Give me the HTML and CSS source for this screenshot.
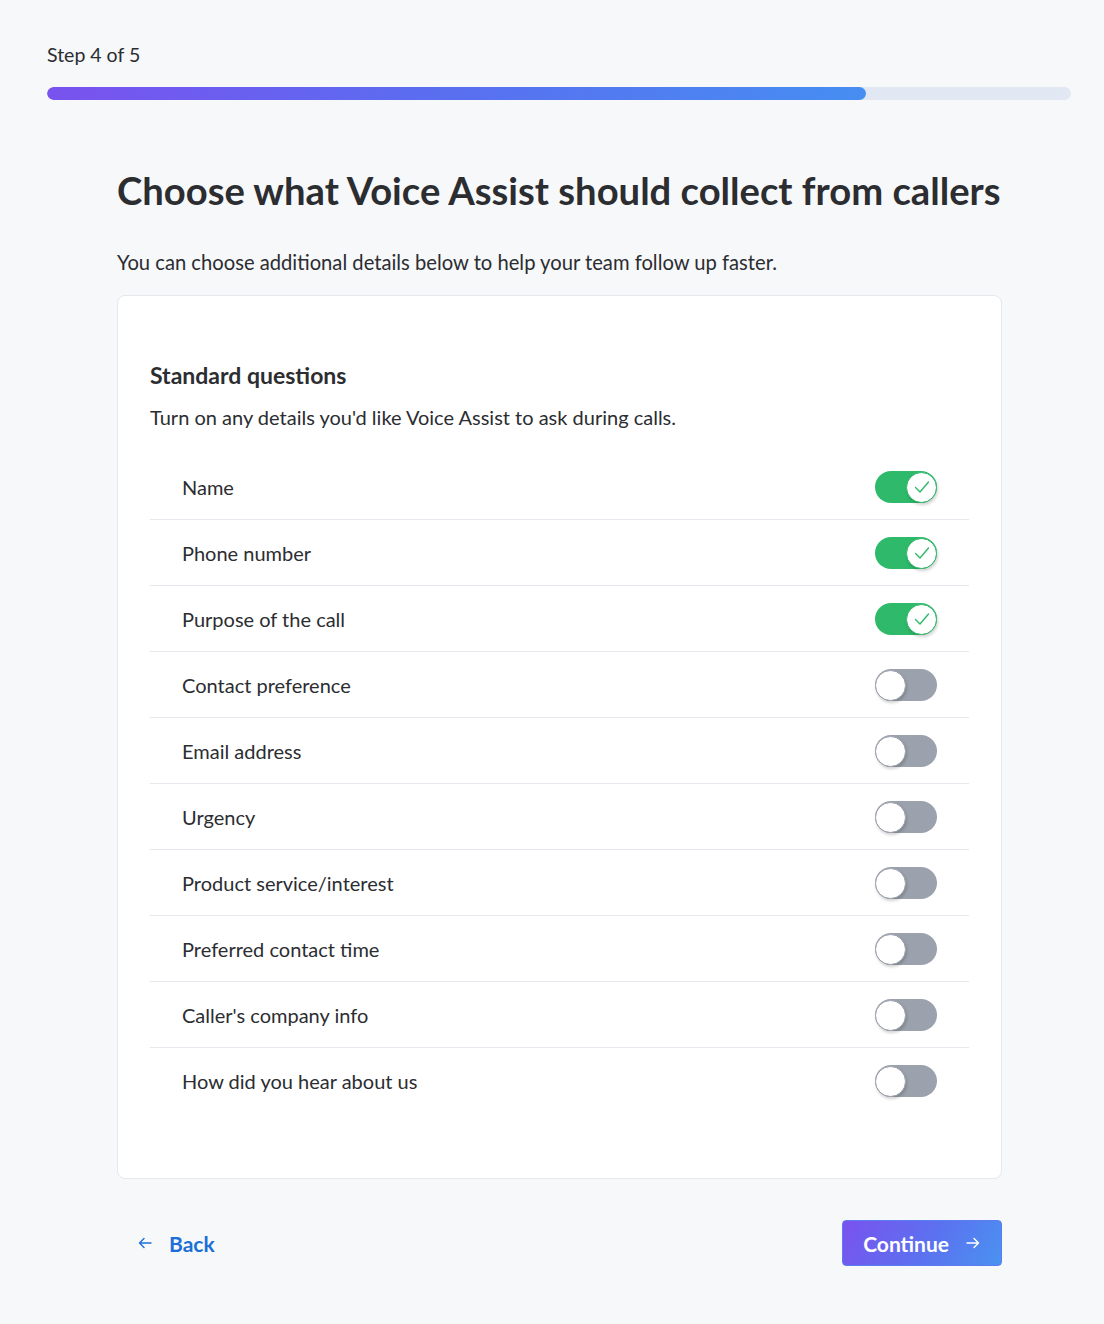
FILE: index.html
```html
<!DOCTYPE html>
<html lang="en">
<head>
<meta charset="utf-8">
<title>Voice Assist setup</title>
<link rel="stylesheet" href="styles.css">
</head>
<body>
<div class="page">
  <header class="progress-head">
    <div class="step-label">Step 4 of 5</div>
    <div class="progress-track"><div class="progress-fill" style="width:80%"></div></div>
  </header>

  <main class="content">
    <h1 class="title">Choose what Voice Assist should collect from callers</h1>
    <p class="subtitle">You can choose additional details below to help your team follow up faster.</p>

    <section class="card">
      <h2 class="card-title">Standard questions</h2>
      <p class="card-desc">Turn on any details you'd like Voice Assist to ask during calls.</p>
      <ul class="rows">
        <li class="row"><span class="row-label">Name</span><span class="toggle on"><span class="knob"><svg viewBox="0 0 18 18" width="18" height="18"><path d="M2.5 9.5l4.5 4.5 8.5-10" fill="none" stroke="#2fb96a" stroke-width="1.4" stroke-linecap="round" stroke-linejoin="round"/></svg></span></span></li>
        <li class="row"><span class="row-label">Phone number</span><span class="toggle on"><span class="knob"><svg viewBox="0 0 18 18" width="18" height="18"><path d="M2.5 9.5l4.5 4.5 8.5-10" fill="none" stroke="#2fb96a" stroke-width="1.4" stroke-linecap="round" stroke-linejoin="round"/></svg></span></span></li>
        <li class="row"><span class="row-label">Purpose of the call</span><span class="toggle on"><span class="knob"><svg viewBox="0 0 18 18" width="18" height="18"><path d="M2.5 9.5l4.5 4.5 8.5-10" fill="none" stroke="#2fb96a" stroke-width="1.4" stroke-linecap="round" stroke-linejoin="round"/></svg></span></span></li>
        <li class="row"><span class="row-label">Contact preference</span><span class="toggle"><span class="knob"></span></span></li>
        <li class="row"><span class="row-label">Email address</span><span class="toggle"><span class="knob"></span></span></li>
        <li class="row"><span class="row-label">Urgency</span><span class="toggle"><span class="knob"></span></span></li>
        <li class="row"><span class="row-label">Product service/interest</span><span class="toggle"><span class="knob"></span></span></li>
        <li class="row"><span class="row-label">Preferred contact time</span><span class="toggle"><span class="knob"></span></span></li>
        <li class="row"><span class="row-label">Caller's company info</span><span class="toggle"><span class="knob"></span></span></li>
        <li class="row"><span class="row-label">How did you hear about us</span><span class="toggle"><span class="knob"></span></span></li>
      </ul>
    </section>

    <footer class="actions">
      <a class="back" href="#"><svg viewBox="0 0 16 16" width="16" height="16"><path d="M14 8H2.5M7 3.5L2.5 8 7 12.5" fill="none" stroke="currentColor" stroke-width="1.4" stroke-linecap="round" stroke-linejoin="round"/></svg><span>Back</span></a>
      <button class="continue" type="button"><span>Continue</span><svg viewBox="0 0 16 16" width="16" height="16"><path d="M2 8h11.5M9 3.5L13.5 8 9 12.5" fill="none" stroke="currentColor" stroke-width="1.4" stroke-linecap="round" stroke-linejoin="round"/></svg></button>
    </footer>
  </main>
</div>
</body>
</html>
```

FILE: styles.css
```css
* { box-sizing: border-box; }
html, body { margin: 0; padding: 0; }
body {
  background: #f7f8fa;
  font-family: "Lato", "Noto Sans", sans-serif;
  color: #2b2d31;
}
.page {
  padding: 40px 33px 58px 47px;
}
.progress-head { display: flex; flex-direction: column; gap: 17px; }
.step-label {
  font-size: 19.5px;
  line-height: 30px;
  color: #2b2d31;
}
.progress-track {
  height: 13px;
  background: #e1e8f4;
  border-radius: 7px;
  overflow: hidden;
}
.progress-fill {
  height: 100%;
  border-radius: 7px;
  background: linear-gradient(90deg, #7a52ee 0%, #5b6cf0 45%, #468ef2 100%);
}
.content {
  width: 885px;
  margin: 0 0 0 70px;
  padding-top: 64px;
}
.title {
  margin: 0;
  font-size: 38.2px;
  line-height: 52px;
  font-weight: 700;
  color: #2b2d31;
}
.subtitle {
  margin: 31px 0 0;
  font-size: 20.2px;
  line-height: 30px;
}
.card {
  margin-top: 18px;
  background: #fff;
  border: 1px solid #e6e8ee;
  border-radius: 8px;
  padding: 64px 32px 65px;
}
.card-title {
  margin: 0;
  font-size: 23px;
  line-height: 30px;
  font-weight: 700;
}
.card-desc {
  margin: 12px 0 0;
  font-size: 20px;
  line-height: 30px;
}
.rows {
  list-style: none;
  margin: 22px 0 0;
  padding: 0;
}
.row {
  display: flex;
  align-items: center;
  justify-content: space-between;
  height: 66px;
  padding: 0 32px;
  border-bottom: 1px solid #e6e8ee;
  font-size: 20px;
}
.row:last-child { border-bottom: none; height: 65px; }
.toggle {
  position: relative;
  width: 62px;
  height: 32px;
  border-radius: 16px;
  background: #9ca2ad;
}
.toggle.on { background: #2fb96a; }
.knob {
  position: absolute;
  top: 1px;
  left: 0;
  width: 31px;
  height: 31px;
  border-radius: 50%;
  background: #fff;
  border: 1px solid #9ca2ad;
  box-shadow: 1px 2px 3px rgba(0,0,0,0.18);
  display: flex;
  align-items: center;
  justify-content: center;
}
.toggle.on .knob {
  left: auto;
  right: 0;
  border-color: #2fb96a;
}
.actions {
  display: flex;
  justify-content: space-between;
  align-items: center;
  margin-top: 41px;
}
.back {
  display: flex;
  align-items: center;
  gap: 16px;
  margin-left: 20px;
  color: #1c6fd6;
  text-decoration: none;
  font-size: 21px;
  font-weight: 700;
}
.continue {
  display: flex;
  align-items: center;
  gap: 16px;
  height: 46px;
  padding: 0 20px 0 20px;
  border: 1px solid #5b7cf0;
  border-radius: 4px;
  background: linear-gradient(120deg, #7a52ee 0%, #5b72f0 55%, #4a92f0 100%);
  color: #fff;
  font-family: inherit;
  font-size: 21px;
  font-weight: 700;
}
```
